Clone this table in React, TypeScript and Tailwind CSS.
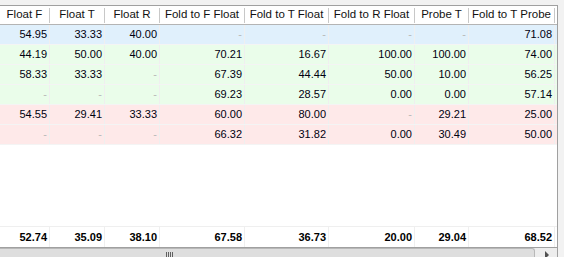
import React from "react";

const widths = [50, 55, 55, 85, 84, 86, 54, 86];
const headers = ["Float F", "Float T", "Float R", "Fold to F Float", "Fold to T Float", "Fold to R Float", "Probe T", "Fold to T Probe"];

type Row = { bg: string; cells: string[] };

const rows: Row[] = [
  { bg: "bg-[#e0f0fc]", cells: ["54.95", "33.33", "40.00", "-", "-", "-", "-", "71.08"] },
  { bg: "bg-[#eafdea]", cells: ["44.19", "50.00", "40.00", "70.21", "16.67", "100.00", "100.00", "74.00"] },
  { bg: "bg-[#eafdea]", cells: ["58.33", "33.33", "-", "67.39", "44.44", "50.00", "10.00", "56.25"] },
  { bg: "bg-[#eafdea]", cells: ["-", "-", "-", "69.23", "28.57", "0.00", "0.00", "57.14"] },
  { bg: "bg-[#fee9e9]", cells: ["54.55", "29.41", "33.33", "60.00", "80.00", "-", "29.21", "25.00"] },
  { bg: "bg-[#fee9e9]", cells: ["-", "-", "-", "66.32", "31.82", "0.00", "30.49", "50.00"] },
];

const totals = ["52.74", "35.09", "38.10", "67.58", "36.73", "20.00", "29.04", "68.52"];

function Cell({ w, v, bold }: { w: number; v: string; bold?: boolean }) {
  const dash = v === "-";
  return (
    <div
      className="flex items-center justify-end pr-[2px] border-r border-[#efefef] h-full shrink-0"
      style={{ width: w }}
    >
      <span className={dash ? "text-[#b8b8b8]" : bold ? "text-black font-bold" : "text-[#000010]"}>{v}</span>
    </div>
  );
}

export default function App() {
  return (
    <div
      className="w-[564px] h-[257px] bg-[#f2f2f2] overflow-hidden text-[11px] leading-none"
      style={{ fontFamily: '"Liberation Sans", Arial, sans-serif' }}
    >
      <div className="mt-[5px] w-[558px] h-[252px] border-t border-r border-[#a0a0a0] bg-white flex flex-col">
        {/* header */}
        <div className="h-[19px] flex border-b border-[#b4b4b4] shrink-0 text-[11.5px]">
          {headers.map((h, i) => (
            <div key={i} className="flex items-center h-full shrink-0" style={{ width: widths[i] }}>
              <div className="flex-1 text-center text-[#111] whitespace-nowrap">{h}</div>
              <div className="w-px h-[15px] bg-[#c8c8c8]" />
            </div>
          ))}
        </div>
        {/* rows */}
        {rows.map((r, ri) => (
          <div key={ri} className={`h-[20px] flex border-b border-[#f4f4f4] shrink-0 ${r.bg}`}>
            {r.cells.map((c, ci) => (
              <Cell key={ci} w={widths[ci]} v={c} />
            ))}
          </div>
        ))}
        <div className="flex-1" />
        {/* footer */}
        <div className="h-[21px] flex border-t border-[#efefef] shrink-0">
          {totals.map((c, ci) => (
            <Cell key={ci} w={widths[ci]} v={c} bold />
          ))}
        </div>
        {/* horizontal scrollbar */}
        <div className="h-[10px] border-t border-[#a0a0a0] bg-[#ededed] flex shrink-0">
          <div className="w-[535px] h-full bg-[#dedede] border-t border-r border-[#b8b8b8] rounded-tr-[3px] flex pl-[166px] pt-[3px] gap-[1px]">
            <div className="w-px h-[5px] bg-[#606060]" />
            <div className="w-px h-[5px] bg-[#606060]" />
            <div className="w-px h-[5px] bg-[#606060]" />
            <div className="w-px h-[5px] bg-[#606060]" />
          </div>
          <div className="flex-1 flex items-start justify-center pt-[3px] pl-[1px]">
            <div className="w-0 h-0 border-y-[4px] border-y-transparent border-l-[4px] border-l-[#505050]" />
          </div>
        </div>
      </div>
    </div>
  );
}
